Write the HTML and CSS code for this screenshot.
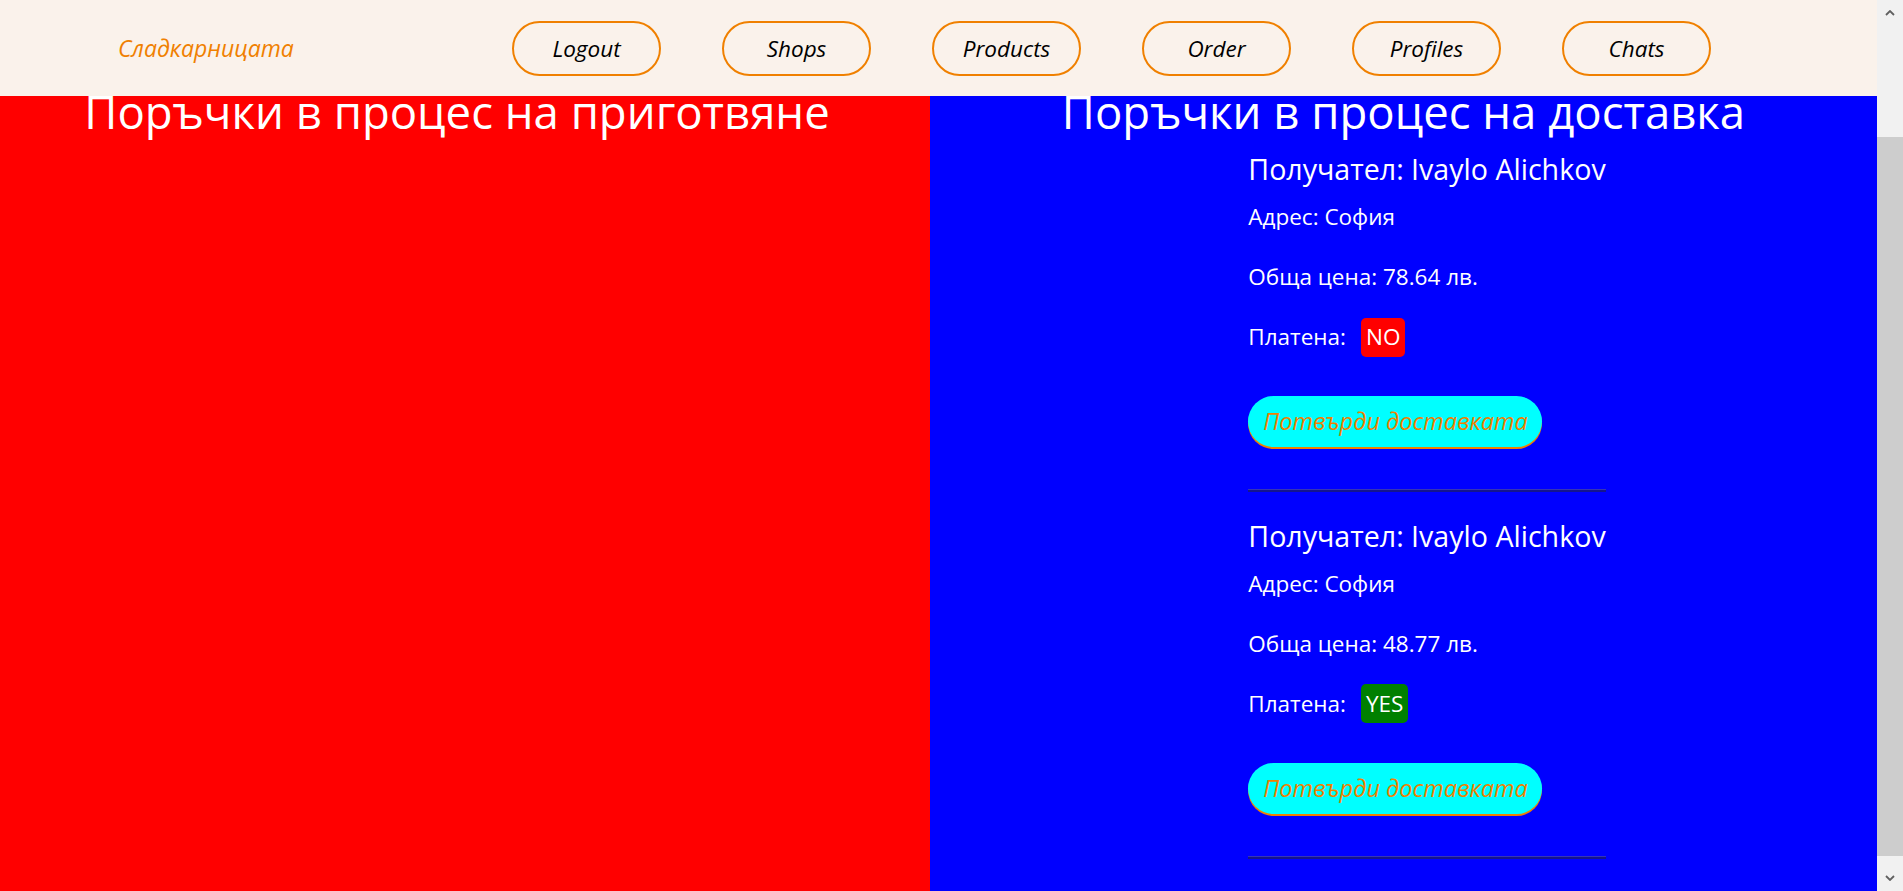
FILE: index.html
```html
<!DOCTYPE html>
<html lang="bg">
<head>
<meta charset="utf-8">
<title>Сладкарницата</title>
<link rel="stylesheet" href="styles.css">
</head>
<body>
<header class="topbar">
  <a class="brand" href="#">Сладкарницата</a>
  <nav class="nav">
    <a class="nav-btn" href="#">Logout</a>
    <a class="nav-btn" href="#">Shops</a>
    <a class="nav-btn" href="#">Products</a>
    <a class="nav-btn" href="#">Order</a>
    <a class="nav-btn" href="#">Profiles</a>
    <a class="nav-btn" href="#">Chats</a>
  </nav>
</header>
<main class="board">
  <section class="col col-prep">
    <h1 class="col-title">Поръчки в процес на приготвяне</h1>
  </section>
  <section class="col col-deliv">
    <h1 class="col-title">Поръчки в процес на доставка</h1>
    <div class="orders-wrap">
      <ul class="orders">
        <li class="order">
          <h3 class="order-name">Получател: Ivaylo Alichkov</h3>
          <p class="order-line order-addr">Адрес: София</p>
          <p class="order-line order-price">Обща цена: 78.64 лв.</p>
          <div class="order-paid"><span class="paid-label">Платена:</span><span class="badge badge-no">NO</span></div>
          <button class="confirm-btn" type="button">Потвърди доставката</button>
          <hr class="order-sep">
        </li>
        <li class="order">
          <h3 class="order-name">Получател: Ivaylo Alichkov</h3>
          <p class="order-line order-addr">Адрес: София</p>
          <p class="order-line order-price">Обща цена: 48.77 лв.</p>
          <div class="order-paid"><span class="paid-label">Платена:</span><span class="badge badge-yes">YES</span></div>
          <button class="confirm-btn" type="button">Потвърди доставката</button>
          <hr class="order-sep">
        </li>
      </ul>
    </div>
  </section>
</main>
<div class="fake-scrollbar" aria-hidden="true">
  <div class="sb-btn">
    <svg width="10" height="6" viewBox="0 0 10 6"><path d="M1 5 L5 1 L9 5" fill="none" stroke="#606060" stroke-width="1.8"/></svg>
  </div>
  <div class="sb-track"><div class="sb-thumb"></div></div>
  <div class="sb-btn">
    <svg width="10" height="6" viewBox="0 0 10 6"><path d="M1 1 L5 5 L9 1" fill="none" stroke="#606060" stroke-width="1.8"/></svg>
  </div>
</div>
</body>
</html>
```
FILE: styles.css
```css
html, body {
  margin: 0;
  padding: 0;
}

body {
  font-family: "Open Sans", "Noto Sans", sans-serif;
  color: #000;
  margin-right: 26px;
}

.topbar {
  position: fixed;
  top: 0;
  left: 0;
  right: 26px;
  height: 96px;
  background: #faf2eb;
  display: flex;
  align-items: center;
  z-index: 10;
}

.brand {
  flex: 0 0 512px;
  box-sizing: border-box;
  padding-left: 118px;
  color: #f08000;
  font-style: italic;
  font-size: 23px;
  text-decoration: none;
}

.nav {
  display: flex;
  gap: 61px;
}

.nav-btn {
  box-sizing: border-box;
  width: 149px;
  height: 55px;
  border: 2.5px solid #f08000;
  border-radius: 28px;
  display: flex;
  align-items: center;
  justify-content: center;
  font-style: italic;
  font-size: 22.5px;
  color: #000;
  text-decoration: none;
}

.board {
  display: grid;
  grid-template-columns: 930px 1fr;
}

.col {
  color: #fff;
  text-align: center;
  padding-top: 79.35px;
  padding-bottom: 127px;
}

.col-prep {
  background: #ff0000;
  padding-right: 16px;
}

.col-deliv {
  background: #0000ff;
}

.col-title {
  margin: 0;
  font-weight: 400;
  font-size: 45.5px;
  line-height: 64px;
  white-space: nowrap;
}

.orders-wrap {
  display: flex;
  justify-content: center;
}

.orders {
  margin: 0;
  padding: 7.59px 0 0 47px;
  list-style: none;
  text-align: left;
}

.order-name {
  margin: 0;
  font-weight: 400;
  font-size: 28.6px;
  line-height: 36px;
  white-space: nowrap;
}

.order-line {
  margin: 0;
  font-size: 22.5px;
  line-height: 30px;
}

.order-addr {
  margin-top: 15.33px;
}

.order-price {
  margin-top: 30px;
}

.order-paid {
  margin-top: 25.5px;
  height: 39px;
  display: flex;
  align-items: center;
  font-size: 22.5px;
  line-height: 30px;
}

.badge {
  margin-left: 15px;
  padding: 4.5px 5px;
  border-radius: 5px;
  color: #fff;
}

.badge-no {
  background: #ff0000;
}

.badge-yes {
  background: #008000;
}

.confirm-btn {
  display: block;
  margin-top: 39.23px;
  box-sizing: border-box;
  width: 294px;
  height: 51px;
  padding: 0 0 0 15px;
  border: 0;
  border-radius: 26px;
  background: #00ffff;
  box-shadow: 0 2px 0 #f08000;
  color: #f08000;
  font-family: "Open Sans", "Noto Sans", sans-serif;
  font-style: italic;
  font-size: 23.5px;
  line-height: 51px;
  text-align: left;
  white-space: nowrap;
  cursor: pointer;
}

.order-sep {
  margin: 42.5px 0 25.14px;
  height: 0;
  border: 0;
  border-top: 1px solid #3535b4;
  border-bottom: 2px solid #14148e;
}

.fake-scrollbar {
  position: fixed;
  top: 0;
  right: 0;
  bottom: 0;
  width: 26px;
  background: #f1f1f1;
  display: flex;
  flex-direction: column;
  z-index: 20;
}

.sb-btn {
  height: 26px;
  display: flex;
  align-items: center;
  justify-content: center;
}

.sb-track {
  flex: 1;
  padding-top: 111px;
}

.sb-thumb {
  height: 719px;
  background: #cdcdcd;
}
```
